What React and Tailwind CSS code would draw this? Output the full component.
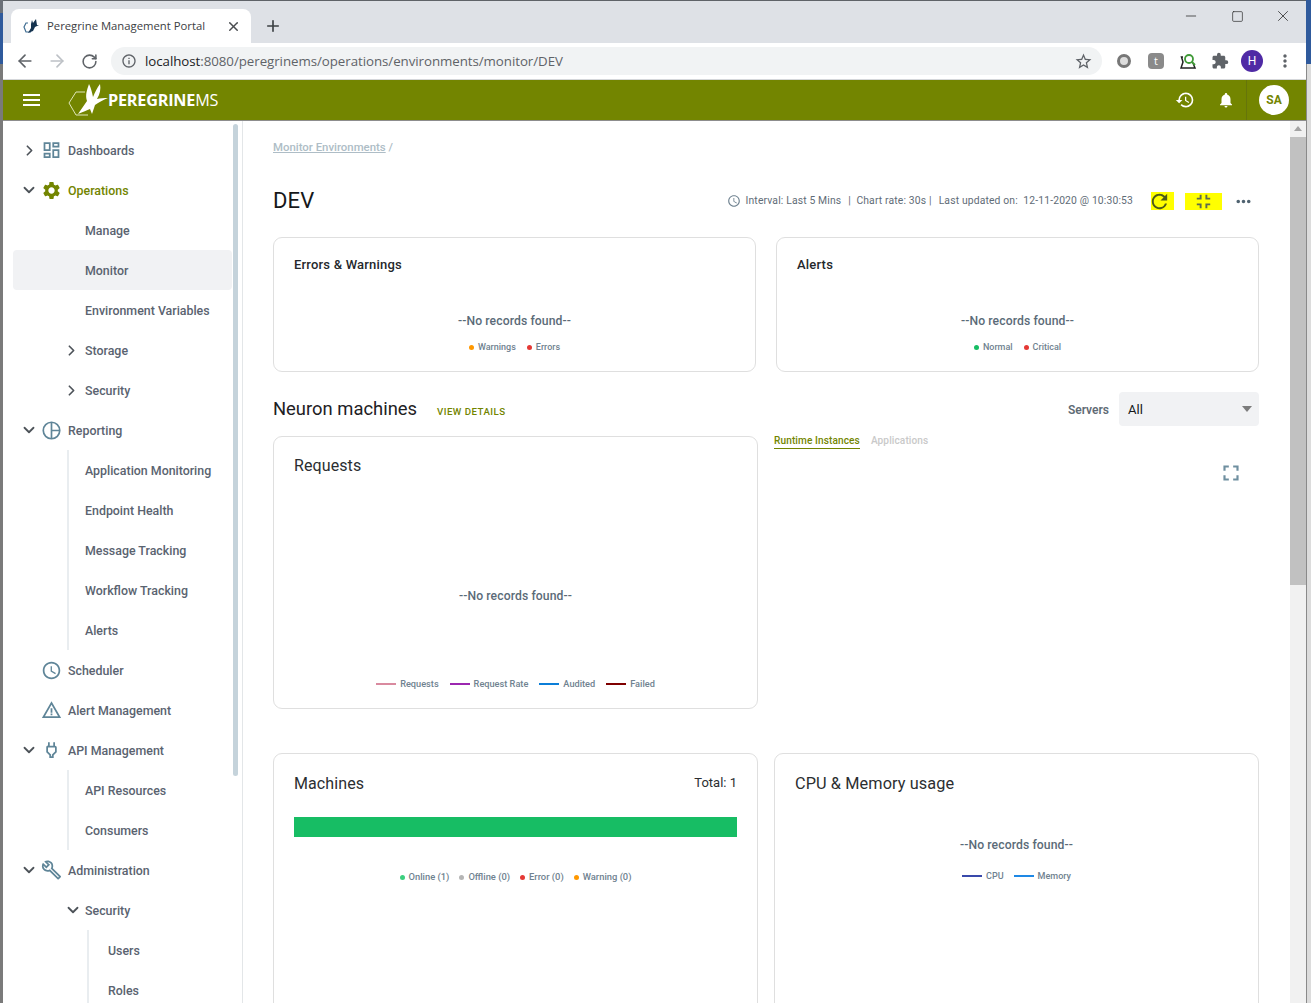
import React from 'react';
import { ChevronRight, ChevronDown, ArrowLeft, ArrowRight, RotateCw, X, Plus, Minus, Square } from 'lucide-react';
import {
  MdHistory, MdNotifications, MdOutlineDashboard, MdSettings, MdRefresh, MdFullscreenExit, MdFullscreen,
  MdMoreHoriz, MdExtension, MdStarBorder, MdInfoOutline, MdAccessTime, MdOutlinePower, MdOutlineBuild, MdWarningAmber, MdMoreVert,
} from 'react-icons/md';

const ReportIcon = () => (
  <svg width="19" height="19" viewBox="0 0 18 18" fill="none" stroke="#5f8598" strokeWidth="1.6">
    <circle cx="9" cy="9" r="7.8" />
    <path d="M9 1.2V16.8M9 9H16.8" />
  </svg>
);

function Logo() {
  return (
    <svg width="41" height="34" viewBox="0 0 41 34" fill="none">
      <path d="M17 9H8L1 20l7 12h12" stroke="#dfe6b8" strokeWidth="1" />
      <path d="M21 1C19 7 17 12 19 18C16 22 13 27 10 31C15 29 19 27 22 26L24 31L27 22C31 19 35 17 40 15C36 15 32 15 29 16C32 11 33 6 32 1C29 5 27 9 25 14C24 9 23 5 21 1Z" fill="#fff" />
    </svg>
  );
}

function NavRow({ label, level = 0, icon, open, active, green, line }) {
  const Chevron = open ? ChevronDown : ChevronRight;
  return (
    <div className={`h-10 flex items-center rounded text-[12.4px] font-medium ${active ? 'bg-[#f1f2f4]' : ''} ${green ? 'text-[#738500]' : 'text-[#5a6370]'}`}>
      {level === 0 && (
        <>
          <div className="w-4 ml-2 flex justify-center">
            {open !== undefined && <Chevron size={open ? 18 : 17} strokeWidth={2.4} className="text-[#4d5359] shrink-0" />}
          </div>
          <div className="w-[21px] ml-1 mr-[6px] flex justify-center">{icon}</div>
        </>
      )}
      {level === 1 && (
        <div className="w-[72px] h-full flex items-center justify-end pr-[5px] shrink-0">
          {line && <div className="h-full w-[2px] bg-[#e9edf0] mr-[11px]" />}
          {open !== undefined && <Chevron size={open ? 18 : 17} strokeWidth={2.4} className={open ? 'text-[#4d5359] shrink-0 -mr-[2px]' : 'text-[#4d5359] shrink-0'} />}
        </div>
      )}
      {level === 2 && (
        <div className="w-[95px] h-full flex shrink-0 pl-[74px]">
          <div className="h-full w-[2px] bg-[#e9edf0]" />
        </div>
      )}
      <span className="pt-[2px]">{label}</span>
    </div>
  );
}

function Sidebar() {
  const ic = '#5f8598';
  return (
    <aside className="w-[240px] shrink-0 flex border-r border-[#e3e6e8] pl-[10px] overflow-hidden">
      <div className="w-[219px] pt-[9px] shrink-0">
        <NavRow label="Dashboards" open={false} icon={<MdOutlineDashboard size={22} color={ic} />} />
        <NavRow label="Operations" open={true} green icon={<MdSettings size={23} color="#738500" />} />
        <NavRow label="Manage" level={1} />
        <NavRow label="Monitor" level={1} active />
        <NavRow label="Environment Variables" level={1} />
        <NavRow label="Storage" level={1} open={false} />
        <NavRow label="Security" level={1} open={false} />
        <NavRow label="Reporting" open={true} icon={<ReportIcon />} />
        <NavRow label="Application Monitoring" level={1} line />
        <NavRow label="Endpoint Health" level={1} line />
        <NavRow label="Message Tracking" level={1} line />
        <NavRow label="Workflow Tracking" level={1} line />
        <NavRow label="Alerts" level={1} line />
        <NavRow label="Scheduler" icon={<MdAccessTime size={21} color={ic} />} />
        <NavRow label="Alert Management" icon={<MdWarningAmber size={22} color={ic} />} />
        <NavRow label="API Management" open={true} icon={<MdOutlinePower size={22} color={ic} />} />
        <NavRow label="API Resources" level={1} line />
        <NavRow label="Consumers" level={1} line />
        <NavRow label="Administration" open={true} icon={<MdOutlineBuild size={22} color={ic} />} />
        <NavRow label="Security" level={1} open={true} />
        <NavRow label="Users" level={2} />
        <NavRow label="Roles" level={2} />
      </div>
      <div className="ml-[1px] pt-[3px] shrink-0">
        <div className="w-[5px] h-[652px] rounded-full bg-[#c5d3db]" />
      </div>
    </aside>
  );
}

function Dot({ color, label }) {
  return (
    <span className="flex items-center gap-[4px]">
      <span className={`w-[5px] h-[5px] rounded-full ${color}`} />
      <span>{label}</span>
    </span>
  );
}

function LineKey({ color, label }) {
  return (
    <span className="flex items-center gap-[4px]">
      <span className={`w-5 h-[2px] ${color}`} />
      <span>{label}</span>
    </span>
  );
}

function NoRecords({ className = '' }) {
  return <div className={`text-center text-[12.2px] font-medium text-[#5b6b78] tracking-[0.1px] ${className}`}>--No records found--</div>;
}

function SmallCard({ title, children }) {
  return (
    <div className="flex-1 h-[135px] border border-[#dfdfdf] rounded-[9px] px-5 pt-[19px]">
      <div className="text-[13px] font-medium leading-[16px] text-[#25282c] tracking-[0.2px]">{title}</div>
      <NoRecords className="mt-[40px] leading-[16px]" />
      <div className="mt-[12px] flex justify-center gap-[11px] text-[9px] font-medium leading-[12px] text-[#6f8290]">{children}</div>
    </div>
  );
}

function Main() {
  return (
    <main className="flex-1 min-w-0 pl-[30px] pr-[31px] pt-[19px]">
      <div className="text-[11.4px] font-medium leading-[14px] text-[#aebdc6] h-[14px]">
        <span className="underline">Monitor Environments</span> /
      </div>
      <div className="mt-[34px] flex items-center h-[26px]">
        <h1 className="text-[22px] font-normal text-[#16181a] leading-[26px] tracking-[0.1px]">DEV</h1>
        <div className="ml-auto flex items-center text-[10.35px] font-normal text-[#5f6c77] tracking-[0.15px]">
          <MdAccessTime size={14} color="#6f8290" className="mr-[5px]" />
          <span>Interval: Last 5 Mins</span>
          <span className="ml-[7px]">|&nbsp; Chart rate: 30s |</span>
          <span className="ml-[7px]">Last updated on:&nbsp; 12-11-2020 @ 10:30:53</span>
          <span className="ml-[18px] w-[23px] h-[18px] bg-[#ffff00] flex items-center justify-center">
            <MdRefresh size={23} color="#4c5a19" className="-ml-[7px]" />
          </span>
          <span className="ml-[11px] w-[37px] h-[17px] bg-[#ffff00] flex items-center justify-center overflow-hidden">
            <MdFullscreenExit size={23} color="#5d6b4e" className="-ml-[1px]" />
          </span>
          <span className="ml-[11px] mr-[5px]">
            <MdMoreHoriz size={21} color="#4f6270" />
          </span>
        </div>
      </div>
      <div className="mt-[23px] flex gap-5">
        <SmallCard title="Errors & Warnings">
          <Dot color="bg-[#ff9800]" label="Warnings" />
          <Dot color="bg-[#e53935]" label="Errors" />
        </SmallCard>
        <SmallCard title="Alerts">
          <Dot color="bg-[#17bd64]" label="Normal" />
          <Dot color="bg-[#e53935]" label="Critical" />
        </SmallCard>
      </div>
      <div className="mt-[20px] h-[34px] flex items-center">
        <h2 className="text-[18.4px] font-normal text-[#1e2124] leading-[22px] -mt-[1px]">Neuron machines</h2>
        <span className="ml-5 text-[9.7px] font-medium tracking-[0.45px] text-[#738500] mt-[7px]">VIEW DETAILS</span>
        <span className="ml-auto text-[12px] font-semibold text-[#5f6b75] mt-[2px]">Servers</span>
        <div className="ml-[10px] w-[140px] h-[34px] bg-[#f1f2f4] rounded flex items-center pl-[9px] pr-[7px] text-[13px] text-[#16181a]">
          <span className="pt-[2px]">All</span>
          <span className="ml-auto w-0 h-0 border-x-[5px] border-x-transparent border-t-[6px] border-t-[#7c7c7c]" />
        </div>
      </div>
      <div className="mt-[10px] flex gap-4">
        <div className="w-[485px] h-[273px] border border-[#dfdfdf] rounded-[9px] px-5 pt-[19px] shrink-0">
          <div className="text-[16px] font-normal leading-[20px] text-[#2b2e31] tracking-[0.1px]">Requests</div>
          <NoRecords className="mt-[112px] leading-[16px]" />
          <div className="mt-[74px] flex justify-center gap-[11px] text-[9.2px] font-medium leading-[12px] text-[#6f8290]">
            <LineKey color="bg-[#d98a9f]" label="Requests" />
            <LineKey color="bg-[#9c27b0]" label="Request Rate" />
            <LineKey color="bg-[#0b7ed8]" label="Audited" />
            <LineKey color="bg-[#7f0000]" label="Failed" />
          </div>
        </div>
        <div className="flex-1 min-w-0 -mt-[1px]">
          <div className="flex gap-[11px] text-[10.1px] font-medium tracking-[0.1px] leading-[12px]">
            <span className="text-[#738500] border-b border-[#738500] pb-[1px]">Runtime Instances</span>
            <span className="text-[#c9c9c9]">Applications</span>
          </div>
          <div className="mt-[11px] flex justify-end pr-[15px]">
            <MdFullscreen size={26} color="#6f8fa0" />
          </div>
        </div>
      </div>
      <div className="mt-[44px] flex gap-4 h-[300px]">
        <div className="w-[485px] border border-[#dfdfdf] rounded-[9px] px-5 pt-[20px] shrink-0">
          <div className="flex items-center justify-between">
            <span className="text-[16px] font-normal leading-[20px] text-[#2b2e31] tracking-[0.1px]">Machines</span>
            <span className="text-[13px] text-[#2b2e31] -mt-[2px]">Total: 1</span>
          </div>
          <div className="mt-[23px] h-5 bg-[#17bd64]" />
          <div className="mt-[34px] flex justify-center gap-[10px] text-[9.4px] font-medium leading-[12px] text-[#6f8290]">
            <Dot color="bg-[#3ccf7e]" label="Online (1)" />
            <Dot color="bg-[#b5b5b5]" label="Offline (0)" />
            <Dot color="bg-[#e53935]" label="Error (0)" />
            <Dot color="bg-[#ff9800]" label="Warning (0)" />
          </div>
        </div>
        <div className="flex-1 border border-[#dfdfdf] rounded-[9px] px-5 pt-[20px]">
          <div className="text-[16.3px] font-normal leading-[20px] text-[#2b2e31] tracking-[0.1px]">CPU &amp; Memory usage</div>
          <NoRecords className="mt-[43px] leading-[16px]" />
          <div className="mt-[17px] flex justify-center gap-[10px] text-[9px] font-medium leading-[12px] text-[#6f8290]">
            <LineKey color="bg-[#3949ab]" label="CPU" />
            <LineKey color="bg-[#1e88e5]" label="Memory" />
          </div>
        </div>
      </div>
    </main>
  );
}

export default function App() {
  return (
    <div className="w-[1311px] h-[1003px] overflow-hidden flex bg-white font-['Roboto',sans-serif]">
      <div className="w-[3px] shrink-0 flex flex-col">
        <div className="h-[13px] bg-[#6b7078]" />
        <div className="h-[51px] bg-[#2f5a9c]" />
        <div className="flex-1 bg-[#7a7a7a]" />
      </div>
      <div className="flex-1 min-w-0 flex flex-col">
        <div className="h-[1px] bg-[#5f6368]" />
        {/* browser tab strip */}
        <div className="h-[42px] bg-[#dee1e6] flex items-end pl-[8px]">
          <div className="w-[240px] h-[34px] bg-white rounded-t-lg flex items-center pl-[12px] pr-[10px]">
            <svg width="16" height="16" viewBox="0 0 16 16" fill="none">
              <path d="M5 5H3L1 9l2 5h5" stroke="#3f6d92" strokeWidth="1.2" />
              <path d="M9 2l1 3 3-4 1 6 2 0-4 2-2 4-5 2 3-5 0-4z" fill="#15334f" />
            </svg>
            <span className="ml-[8px] text-[11.3px] text-[#3c4043] font-['Open_Sans',sans-serif]">Peregrine Management Portal</span>
            <X size={15} strokeWidth={2.4} className="ml-auto text-[#4a4d50]" />
          </div>
          <div className="ml-[13px] h-[34px] flex items-center">
            <Plus size={18} strokeWidth={2.2} className="text-[#3c4043]" />
          </div>
          <div className="ml-auto flex self-start text-[#1f1f1f]">
            <div className="w-[46px] h-[30px] flex items-center justify-center"><Minus size={16} strokeWidth={1.1} /></div>
            <div className="w-[46px] h-[30px] flex items-center justify-center"><Square size={13} strokeWidth={1.2} /></div>
            <div className="w-[46px] h-[30px] flex items-center justify-center"><X size={18} strokeWidth={1} /></div>
          </div>
        </div>
        {/* browser toolbar */}
        <div className="h-[36px] bg-white flex items-center border-b border-[#d5d7da] box-content">
          <ArrowLeft size={20} strokeWidth={2} className="ml-[12px] text-[#5f6368]" />
          <ArrowRight size={20} strokeWidth={2} className="ml-[12px] text-[#bdc1c6]" />
          <RotateCw size={17} strokeWidth={2.2} className="ml-[14px] text-[#5f6368]" />
          <div className="ml-[13px] w-[991px] h-[28px] rounded-full bg-[#f1f3f4] flex items-center pl-[10px] pr-[9px]">
            <MdInfoOutline size={16} color="#5f6368" />
            <span className="ml-[8px] pt-[2px] text-[13.3px] text-[#202124] font-['Open_Sans',sans-serif] tracking-[-0.05px]">localhost<span className="text-[#5f6368]">:8080/peregrinems/operations/environments/monitor/DEV</span></span>
            <MdStarBorder size={19} color="#5f6368" className="ml-auto" />
          </div>
          <div className="ml-[15px] w-[14px] h-[14px] rounded-full border-[3px] border-[#777] bg-[#ddd]" />
          <div className="ml-[17px] w-4 h-4 rounded-sm bg-[#8a8a8a] text-white text-[11px] flex items-center justify-center font-['Open_Sans',sans-serif]">t</div>
          <svg className="ml-[16px]" width="17" height="17" viewBox="0 0 17 17" fill="none">
            <path d="M3 4H1.5L3 9l-2 6h14L13 10" stroke="#222" strokeWidth="1.5" />
            <circle cx="9" cy="6" r="4" stroke="#3f9a37" strokeWidth="1.8" />
            <path d="M12 9l3 3" stroke="#3f9a37" strokeWidth="1.8" />
          </svg>
          <MdExtension size={18} color="#5f6368" className="ml-[14px]" />
          <div className="ml-[12px] w-[22px] h-[22px] rounded-full bg-[#4f2aa5] text-white text-[12px] flex items-center justify-center">H</div>
          <MdMoreVert size={20} color="#5f6368" className="ml-[12px]" />
        </div>
        {/* app header */}
        <header className="h-[41px] shrink-0 bg-[#738500] border-b border-[#8d8d8d] flex items-center text-white">
          <div className="ml-[20px] w-[17px] flex flex-col gap-[3px]">
            <span className="h-[2px] bg-white" />
            <span className="h-[2px] bg-white" />
            <span className="h-[2px] bg-white" />
          </div>
          <div className="ml-[28px]"><Logo /></div>
          <span className="-ml-[1px] text-[16.2px] font-bold font-['Open_Sans',sans-serif] tracking-[-0.2px]">PEREGRINE<span className="font-normal">MS</span></span>
          <MdHistory size={20} className="ml-auto" />
          <MdNotifications size={18} className="ml-[22px]" />
          <div className="ml-[11px] h-full w-[1px] bg-[#66750a]" />
          <div className="ml-[12px] mr-[17px] w-[30px] h-[30px] rounded-full bg-white text-[#738500] text-[12px] font-bold flex items-center justify-center">SA</div>
        </header>
        <div className="flex-1 min-h-0 flex">
          <Sidebar />
          <Main />
          <div className="w-[16px] shrink-0 bg-[#f1f1f1] pt-[5px]">
            <div className="h-[11px] flex justify-center">
              <span className="w-0 h-0 border-x-[4px] border-x-transparent border-b-[5px] border-b-[#a3a3a3]" />
            </div>
            <div className="h-[448px] bg-[#c1c1c1]" />
          </div>
        </div>
      </div>
      <div className="w-[5px] shrink-0 flex flex-col">
        <div className="h-[64px] bg-[#2f5a9c]" />
        <div className="flex-1 bg-[#dcdcdc] border-l border-[#8a8a8a]" />
      </div>
    </div>
  );
}
